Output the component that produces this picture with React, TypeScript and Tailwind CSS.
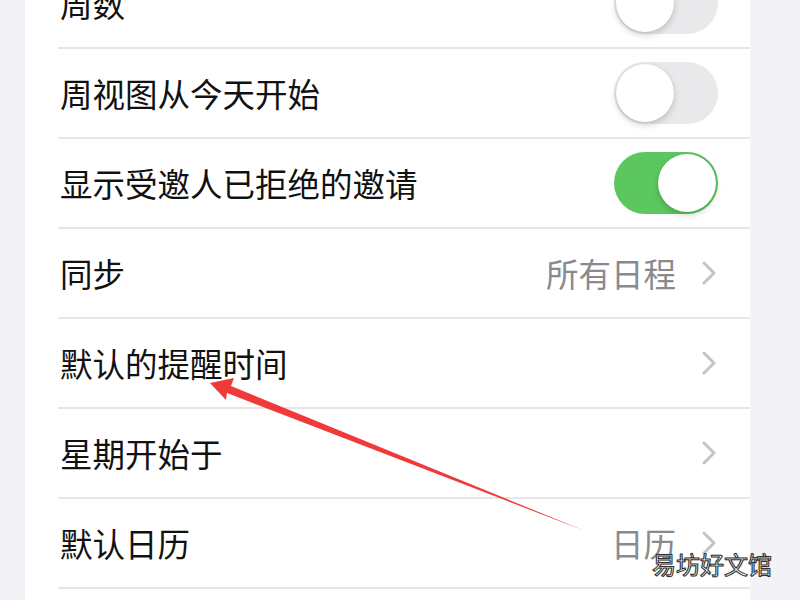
import React from "react";

const font = { fontFamily: '"Noto Sans CJK SC", "Noto Sans", sans-serif' };

function Toggle({ on }: { on: boolean }) {
  return (
    <div
      className={`relative w-[104px] h-[62px] rounded-full ${on ? "bg-[#5bc75e]" : "bg-[#e9e9eb]"}`}
    >
      <div
        className={`absolute top-[2px] w-[58px] h-[58px] rounded-full bg-white shadow-[0_3px_6px_rgba(0,0,0,0.18),0_0_1px_rgba(0,0,0,0.15)] ${on ? "left-[44px]" : "left-[2px]"}`}
      />
    </div>
  );
}

function Chevron() {
  return (
    <svg width="14" height="24" viewBox="0 0 14 24" className="shrink-0">
      <path d="M2 2 L12 12 L2 22" fill="none" stroke="#c4c4c7" strokeWidth="3" strokeLinecap="round" strokeLinejoin="round" />
    </svg>
  );
}

type RowProps = { label: string; toggle?: boolean; on?: boolean; value?: string };

function Row({ label, toggle, on, value }: RowProps) {
  return (
    <div className="ml-[33px] h-[90px] border-b-2 border-[#e6e6e9] flex items-center justify-between pl-[2px]">
      <span className="text-[32.5px] leading-none text-[#111111]" style={font}>
        {label}
      </span>
      {toggle ? (
        <div className="mr-[32px]">
          <Toggle on={!!on} />
        </div>
      ) : (
        <div className="flex items-center mr-[34px] gap-[26px]">
          {value && (
            <span className="text-[32.5px] leading-none text-[#8a8a8e]" style={font}>
              {value}
            </span>
          )}
          <Chevron />
        </div>
      )}
    </div>
  );
}

export default function App() {
  const rows: RowProps[] = [
    { label: "周数", toggle: true, on: false },
    { label: "周视图从今天开始", toggle: true, on: false },
    { label: "显示受邀人已拒绝的邀请", toggle: true, on: true },
    { label: "同步", value: "所有日程" },
    { label: "默认的提醒时间" },
    { label: "星期开始于" },
    { label: "默认日历", value: "日历" },
    { label: "" },
  ];
  return (
    <div className="relative w-[800px] h-[600px] overflow-hidden bg-[#f2f2f7]">
      <div className="ml-[25px] w-[725px] mt-[-41px] bg-white">
        {rows.map((r, i) => (
          <Row key={i} {...r} />
        ))}
      </div>
      <svg className="absolute left-0 top-0" width="800" height="600" viewBox="0 0 800 600">
        <polygon
          points="210,383 234,378 231,386 585,531 227,393 226,400"
          fill="#f03a3a"
        />
      </svg>
      <div
        className="absolute left-[652px] top-[552px] text-[24px] leading-none text-white"
        style={{
          ...font,
          WebkitTextStroke: "1px #333",
          textShadow: "0 0 1px #000",
        }}
      >
        易坊好文馆
      </div>
    </div>
  );
}
